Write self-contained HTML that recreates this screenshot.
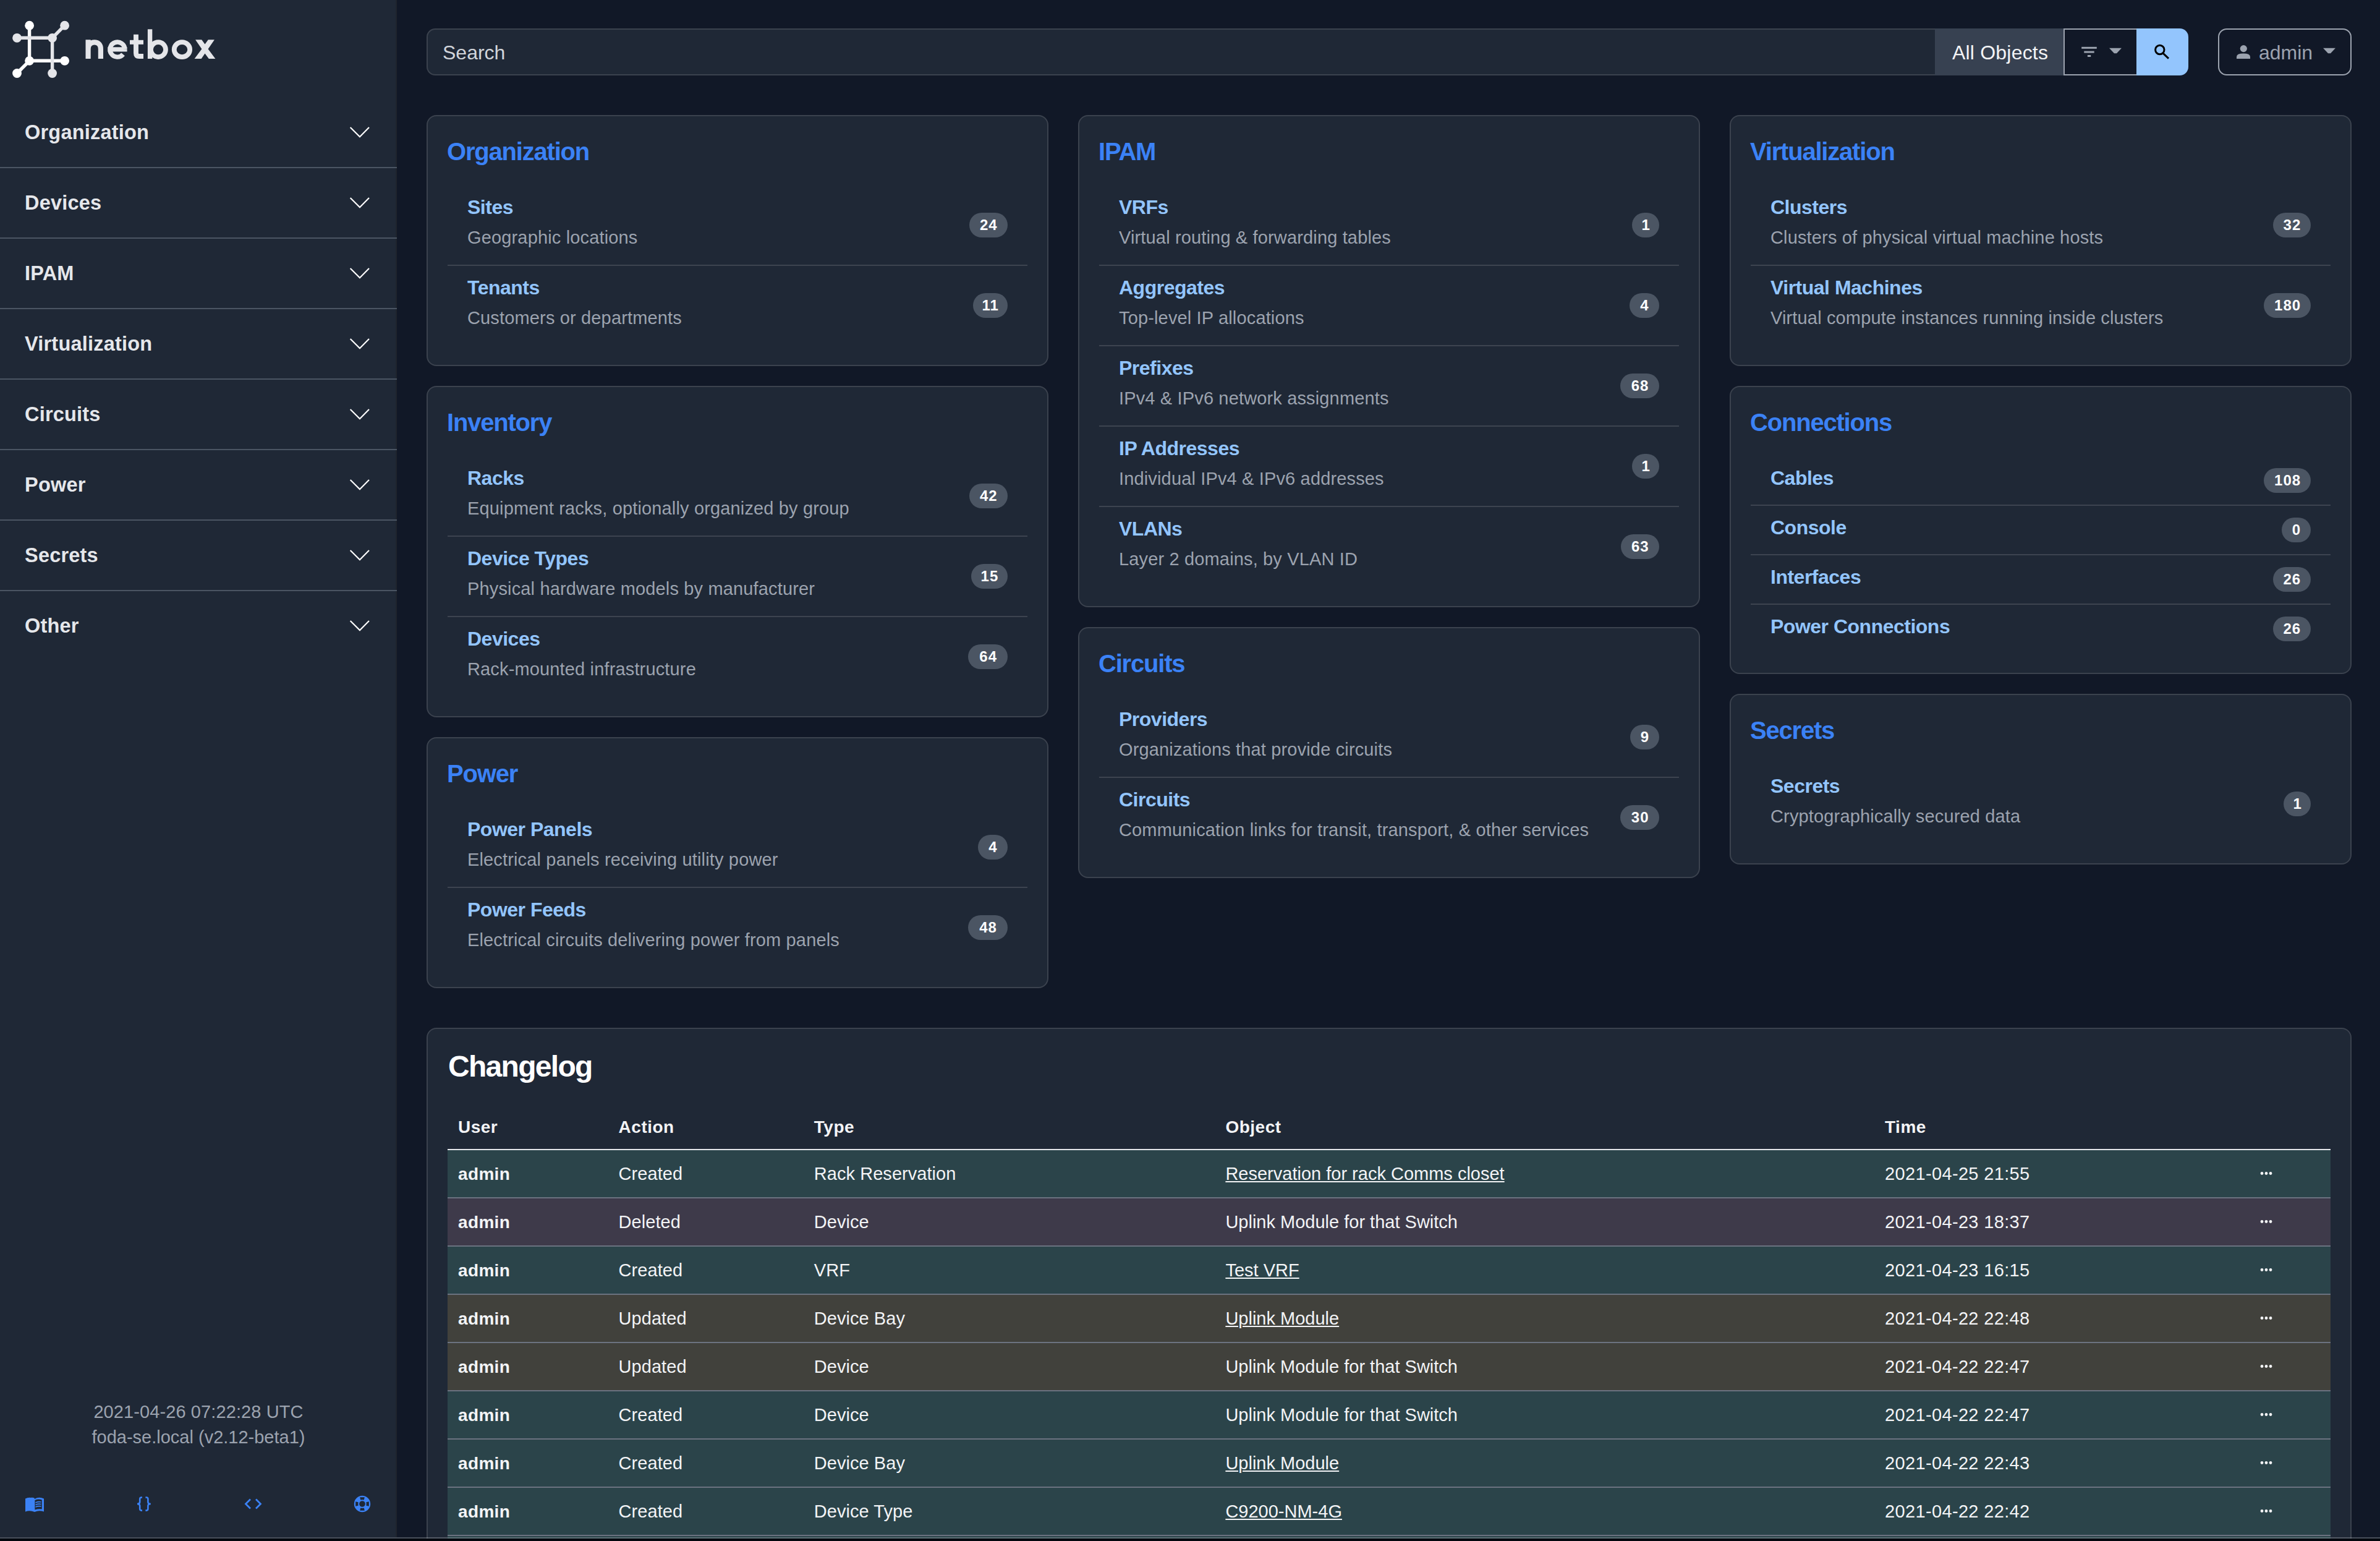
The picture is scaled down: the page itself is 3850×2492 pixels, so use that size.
<!DOCTYPE html>
<html><head><meta charset="utf-8"><title>NetBox</title>
<style>
html,body{margin:0;padding:0;}
body{width:3850px;height:2492px;overflow:hidden;position:relative;background:#111827;font-family:"Liberation Sans",sans-serif;}
.t{position:absolute;white-space:nowrap;}
.badge{position:absolute;height:40px;line-height:40px;border-radius:20px;background:#4b5563;color:#fff;font-weight:700;font-size:24px;text-align:center;letter-spacing:1px;text-indent:1px;}
</style></head><body>
<div style="position:absolute;left:0px;top:0px;width:642px;height:2486px;background:#1f2836;"></div>
<div style="position:absolute;left:640px;top:0px;width:2px;height:2486px;background:#1f242d;"></div>
<svg style="position:absolute;left:0;top:0" width="400" height="140" viewBox="0 0 400 140">
<g stroke-width="5.4" stroke-linecap="butt" fill="none">
<line x1="47.6" y1="41.2" x2="47.6" y2="98.3" stroke="#ffffff"/>
<line x1="47.6" y1="98.3" x2="104.6" y2="98.3" stroke="#ffffff"/>
<line x1="47.6" y1="98.3" x2="27.5" y2="118.5" stroke="#ffffff"/>
<line x1="27.5" y1="61.3" x2="84.6" y2="61.3" stroke="#e4e5e9"/>
<line x1="84.6" y1="61.3" x2="84.6" y2="118.5" stroke="#e4e5e9"/>
<line x1="84.6" y1="61.3" x2="104.6" y2="41.2" stroke="#e4e5e9"/>
</g>
<g>
<circle cx="47.6" cy="41.2" r="7.4" fill="#fff"/>
<circle cx="104.6" cy="41.2" r="7.4" fill="#e4e5e9"/>
<circle cx="27.5" cy="61.3" r="7.4" fill="#e4e5e9"/>
<circle cx="84.6" cy="61.3" r="7.4" fill="#e4e5e9"/>
<circle cx="47.6" cy="98.3" r="7.4" fill="#fff"/>
<circle cx="104.6" cy="98.3" r="7.4" fill="#fff"/>
<circle cx="27.5" cy="118.5" r="7.4" fill="#fff"/>
<circle cx="84.6" cy="118.5" r="7.4" fill="#e4e5e9"/>
</g>
<g fill="none" stroke="#e4e5e9">
<path d="M142.6 95 V64.3 M142.6 79 C142.6 72 147 68.4 152.8 68.4 C159 68.4 162.9 72 162.9 79 V95" stroke-width="8.2"/>
<path d="M174.2 79.85 H205.6 M201.9 79.85 A12 12 0 1 0 199.1 87.8" stroke-width="7.4"/>
<path d="M220 55.7 V86 Q220 91 225 91 H232" stroke-width="7.9"/>
<path d="M210 68.3 H232" stroke-width="7"/>
<path d="M242.6 47.3 V95" stroke-width="7.4"/>
<circle cx="256" cy="80.15" r="12" stroke-width="7.7"/>
<ellipse cx="294.45" cy="80.15" rx="12.7" ry="12" stroke-width="7.8"/>
</g>
<path d="M316.1 64.3 H326.2 L331.5 71.5 L336.8 64.3 H346.9 L336.6 79.2 L348.4 95 H337.8 L331.5 86.5 L325.7 95 H314.6 L326.4 79.2 Z" fill="#e4e5e9"/>
</svg>
<div class="t " style="left:40px;top:198.49px;font-size:32.5px;line-height:32.5px;color:#e5e7eb;font-weight:700;letter-spacing:0.2px;">Organization</div>
<svg style="position:absolute;left:560px;top:196px" width="44" height="30"><polyline points="6.7,10 22,25.2 37,10" fill="none" stroke="#fff" stroke-width="2.2"/></svg>
<div style="position:absolute;left:0px;top:270px;width:642px;height:2px;background:#4b5563;"></div>
<div class="t " style="left:40px;top:312.49px;font-size:32.5px;line-height:32.5px;color:#e5e7eb;font-weight:700;letter-spacing:0.2px;">Devices</div>
<svg style="position:absolute;left:560px;top:310px" width="44" height="30"><polyline points="6.7,10 22,25.2 37,10" fill="none" stroke="#fff" stroke-width="2.2"/></svg>
<div style="position:absolute;left:0px;top:384px;width:642px;height:2px;background:#4b5563;"></div>
<div class="t " style="left:40px;top:426.49px;font-size:32.5px;line-height:32.5px;color:#e5e7eb;font-weight:700;letter-spacing:0.2px;">IPAM</div>
<svg style="position:absolute;left:560px;top:424px" width="44" height="30"><polyline points="6.7,10 22,25.2 37,10" fill="none" stroke="#fff" stroke-width="2.2"/></svg>
<div style="position:absolute;left:0px;top:498px;width:642px;height:2px;background:#4b5563;"></div>
<div class="t " style="left:40px;top:540.49px;font-size:32.5px;line-height:32.5px;color:#e5e7eb;font-weight:700;letter-spacing:0.2px;">Virtualization</div>
<svg style="position:absolute;left:560px;top:538px" width="44" height="30"><polyline points="6.7,10 22,25.2 37,10" fill="none" stroke="#fff" stroke-width="2.2"/></svg>
<div style="position:absolute;left:0px;top:612px;width:642px;height:2px;background:#4b5563;"></div>
<div class="t " style="left:40px;top:654.49px;font-size:32.5px;line-height:32.5px;color:#e5e7eb;font-weight:700;letter-spacing:0.2px;">Circuits</div>
<svg style="position:absolute;left:560px;top:652px" width="44" height="30"><polyline points="6.7,10 22,25.2 37,10" fill="none" stroke="#fff" stroke-width="2.2"/></svg>
<div style="position:absolute;left:0px;top:726px;width:642px;height:2px;background:#4b5563;"></div>
<div class="t " style="left:40px;top:768.49px;font-size:32.5px;line-height:32.5px;color:#e5e7eb;font-weight:700;letter-spacing:0.2px;">Power</div>
<svg style="position:absolute;left:560px;top:766px" width="44" height="30"><polyline points="6.7,10 22,25.2 37,10" fill="none" stroke="#fff" stroke-width="2.2"/></svg>
<div style="position:absolute;left:0px;top:840px;width:642px;height:2px;background:#4b5563;"></div>
<div class="t " style="left:40px;top:882.49px;font-size:32.5px;line-height:32.5px;color:#e5e7eb;font-weight:700;letter-spacing:0.2px;">Secrets</div>
<svg style="position:absolute;left:560px;top:880px" width="44" height="30"><polyline points="6.7,10 22,25.2 37,10" fill="none" stroke="#fff" stroke-width="2.2"/></svg>
<div style="position:absolute;left:0px;top:954px;width:642px;height:2px;background:#4b5563;"></div>
<div class="t " style="left:40px;top:996.49px;font-size:32.5px;line-height:32.5px;color:#e5e7eb;font-weight:700;letter-spacing:0.2px;">Other</div>
<svg style="position:absolute;left:560px;top:994px" width="44" height="30"><polyline points="6.7,10 22,25.2 37,10" fill="none" stroke="#fff" stroke-width="2.2"/></svg>
<div class="t" style="left:0;width:642px;text-align:center;top:2268.90px;font-size:29px;line-height:28px;color:#9ca3af;letter-spacing:0.1px">2021-04-26 07:22:28 UTC</div>
<div class="t" style="left:0;width:642px;text-align:center;top:2310.10px;font-size:29px;line-height:28px;color:#9ca3af;letter-spacing:0px">foda-se.local (v2.12-beta1)</div>
<svg style="position:absolute;left:0;top:2400px" width="642" height="60" viewBox="0 2400 642 60">
<path d="M41 2424 C48 2421 58 2421 55.5 2424.5 L55.5 2444 C50 2442 45 2442 41 2444.5 Z" fill="#3b82f6"/>
<path d="M41 2423.5 Q48 2420 56 2424 Q63 2420 71 2423.5 V2444.6 Q63 2441.5 56 2445 Q48 2441.5 41 2444.6 Z" fill="#3b82f6"/>
<path d="M56.4 2426 Q62 2423.5 67.8 2425.5 V2440.5 Q62 2439.5 56.4 2441.5 Z" fill="#1f2836"/>
<path d="M57.5 2430 Q62 2428 66.5 2429 M57.5 2433.5 Q62 2431.5 66.5 2432.5 M57.5 2437 Q62 2435 66.5 2436" stroke="#3b82f6" stroke-width="1.6" fill="none"/>
<path d="M230 2421.5 H228.8 Q226.2 2421.5 226.2 2424.2 V2429 Q226.2 2432 222 2432 Q226.2 2432 226.2 2435 V2439.8 Q226.2 2442.6 228.8 2442.6 H230 M235.4 2421.5 H236.8 Q239.4 2421.5 239.4 2424.2 V2429 Q239.4 2432 243.8 2432 Q239.4 2432 239.4 2435 V2439.8 Q239.4 2442.6 236.8 2442.6 H235.4" stroke="#3b82f6" stroke-width="2.6" fill="none"/>
<path d="M405 2424.5 L397.5 2432 L405 2439.5 M414 2424.5 L421.5 2432 L414 2439.5" stroke="#3b82f6" stroke-width="2.8" fill="none"/>
<circle cx="586" cy="2432" r="13.2" fill="#3b82f6"/>
<circle cx="586" cy="2432" r="4.8" fill="#1f2836"/>
<path d="M582.2 2421.2 H589.8 L588.8 2425.6 Q586 2424.9 583.2 2425.6 Z" fill="#1f2836"/>
<path d="M582.2 2442.8 H589.8 L588.8 2438.4 Q586 2439.1 583.2 2438.4 Z" fill="#1f2836"/>
<path d="M575.2 2428.2 V2435.8 L579.6 2434.8 Q578.9 2432 579.6 2429.2 Z" fill="#1f2836"/>
<path d="M596.8 2428.2 V2435.8 L592.4 2434.8 Q593.1 2432 592.4 2429.2 Z" fill="#1f2836"/>
</svg>
<div style="position:absolute;left:690px;top:46px;width:2440px;height:76px;box-sizing:border-box;background:#1f2836;border:2px solid #3b424e;border-right:none;border-radius:14px 0 0 14px;"></div>
<div class="t " style="left:716px;top:69.11px;font-size:32px;line-height:32px;color:#d1d5db;">Search</div>
<div style="position:absolute;left:3130px;top:46px;width:208px;height:76px;background:#374151;"></div>
<div class="t " style="left:3158px;top:69.11px;font-size:32px;line-height:32px;color:#f3f4f6;letter-spacing:0.2px;">All Objects</div>
<div style="position:absolute;left:3338px;top:46px;width:118px;height:76px;box-sizing:border-box;background:#111827;border:2px solid #9ca3af;border-right:none;"></div>
<svg style="position:absolute;left:3338px;top:46px" width="118" height="76" viewBox="3338 46 118 76">
<rect x="3367.2" y="75.8" width="24.6" height="3" fill="#9ca3af"/>
<rect x="3371.3" y="82.6" width="16.4" height="3" fill="#9ca3af"/>
<rect x="3376.9" y="89" width="5.3" height="3" fill="#9ca3af"/>
<path d="M3412 77.8 H3432 L3424 86.2 H3420 Z" fill="#9ca3af"/>
</svg>
<div style="position:absolute;left:3456px;top:46px;width:84px;height:76px;background:#93c5fd;border-radius:0 14px 14px 0;"></div>
<svg style="position:absolute;left:3456px;top:46px" width="84" height="76" viewBox="3456 46 84 76">
<circle cx="3493.8" cy="80.5" r="7.2" stroke="#000" stroke-width="3" fill="none"/>
<line x1="3498.8" y1="85.8" x2="3508" y2="94.6" stroke="#000" stroke-width="3"/>
</svg>
<div style="position:absolute;left:3588px;top:46px;width:216px;height:76px;box-sizing:border-box;border:2px solid #9ca3af;border-radius:14px;"></div>
<svg style="position:absolute;left:3600px;top:60px" width="60" height="50" viewBox="3600 60 60 50">
<circle cx="3629.3" cy="78.6" r="5.6" fill="#9ca3af"/>
<path d="M3618 95 V92 Q3618 86.6 3629 86.6 Q3640 86.6 3640 92 V95 Z" fill="#9ca3af"/>
</svg>
<div class="t " style="left:3654px;top:68.81px;font-size:32px;line-height:32px;color:#9ca3af;">admin</div>
<svg style="position:absolute;left:3750px;top:70px" width="40" height="30" viewBox="3750 70 40 30">
<path d="M3758 77.8 H3778 L3770 86.2 H3766 Z" fill="#9ca3af"/>
</svg>
<div style="position:absolute;left:690px;top:186px;width:1006px;height:406px;box-sizing:border-box;background:#1f2836;border:2px solid #3b424e;border-radius:16px;"></div>
<div class="t " style="left:723px;top:224.64px;font-size:40px;line-height:40px;color:#3b82f6;font-weight:700;letter-spacing:-1.2px;">Organization</div>
<div class="t " style="left:756px;top:318.61px;font-size:32px;line-height:32px;color:#93c5fd;font-weight:700;letter-spacing:-0.5px;">Sites</div>
<div class="t " style="left:756px;top:370.45px;font-size:29px;line-height:29px;color:#9ca3af;letter-spacing:0.15px;">Geographic locations</div>
<div class="badge" style="left:1567.5px;top:343.5px;width:62.5px;">24</div>
<div style="position:absolute;left:724px;top:428px;width:938px;height:2px;background:#3d4450;"></div>
<div class="t " style="left:756px;top:448.61px;font-size:32px;line-height:32px;color:#93c5fd;font-weight:700;letter-spacing:-0.5px;">Tenants</div>
<div class="t " style="left:756px;top:500.45px;font-size:29px;line-height:29px;color:#9ca3af;letter-spacing:0.15px;">Customers or departments</div>
<div class="badge" style="left:1573.6px;top:473.5px;width:56.4px;">11</div>
<div style="position:absolute;left:690px;top:624px;width:1006px;height:536px;box-sizing:border-box;background:#1f2836;border:2px solid #3b424e;border-radius:16px;"></div>
<div class="t " style="left:723px;top:662.64px;font-size:40px;line-height:40px;color:#3b82f6;font-weight:700;letter-spacing:-1.2px;">Inventory</div>
<div class="t " style="left:756px;top:756.61px;font-size:32px;line-height:32px;color:#93c5fd;font-weight:700;letter-spacing:-0.5px;">Racks</div>
<div class="t " style="left:756px;top:808.45px;font-size:29px;line-height:29px;color:#9ca3af;letter-spacing:0.15px;">Equipment racks, optionally organized by group</div>
<div class="badge" style="left:1567.5px;top:781.5px;width:62.5px;">42</div>
<div style="position:absolute;left:724px;top:866px;width:938px;height:2px;background:#3d4450;"></div>
<div class="t " style="left:756px;top:886.61px;font-size:32px;line-height:32px;color:#93c5fd;font-weight:700;letter-spacing:-0.5px;">Device Types</div>
<div class="t " style="left:756px;top:938.45px;font-size:29px;line-height:29px;color:#9ca3af;letter-spacing:0.15px;">Physical hardware models by manufacturer</div>
<div class="badge" style="left:1570.8px;top:911.5px;width:59.2px;">15</div>
<div style="position:absolute;left:724px;top:996px;width:938px;height:2px;background:#3d4450;"></div>
<div class="t " style="left:756px;top:1016.61px;font-size:32px;line-height:32px;color:#93c5fd;font-weight:700;letter-spacing:-0.5px;">Devices</div>
<div class="t " style="left:756px;top:1068.45px;font-size:29px;line-height:29px;color:#9ca3af;letter-spacing:0.15px;">Rack-mounted infrastructure</div>
<div class="badge" style="left:1566.4px;top:1041.5px;width:63.6px;">64</div>
<div style="position:absolute;left:690px;top:1192px;width:1006px;height:406px;box-sizing:border-box;background:#1f2836;border:2px solid #3b424e;border-radius:16px;"></div>
<div class="t " style="left:723px;top:1230.64px;font-size:40px;line-height:40px;color:#3b82f6;font-weight:700;letter-spacing:-1.2px;">Power</div>
<div class="t " style="left:756px;top:1324.61px;font-size:32px;line-height:32px;color:#93c5fd;font-weight:700;letter-spacing:-0.5px;">Power Panels</div>
<div class="t " style="left:756px;top:1376.45px;font-size:29px;line-height:29px;color:#9ca3af;letter-spacing:0.15px;">Electrical panels receiving utility power</div>
<div class="badge" style="left:1582.0px;top:1349.5px;width:48.0px;">4</div>
<div style="position:absolute;left:724px;top:1434px;width:938px;height:2px;background:#3d4450;"></div>
<div class="t " style="left:756px;top:1454.61px;font-size:32px;line-height:32px;color:#93c5fd;font-weight:700;letter-spacing:-0.5px;">Power Feeds</div>
<div class="t " style="left:756px;top:1506.45px;font-size:29px;line-height:29px;color:#9ca3af;letter-spacing:0.15px;">Electrical circuits delivering power from panels</div>
<div class="badge" style="left:1566.0px;top:1479.5px;width:64.0px;">48</div>
<div style="position:absolute;left:1744px;top:186px;width:1006px;height:796px;box-sizing:border-box;background:#1f2836;border:2px solid #3b424e;border-radius:16px;"></div>
<div class="t " style="left:1777px;top:224.64px;font-size:40px;line-height:40px;color:#3b82f6;font-weight:700;letter-spacing:-1.2px;">IPAM</div>
<div class="t " style="left:1810px;top:318.61px;font-size:32px;line-height:32px;color:#93c5fd;font-weight:700;letter-spacing:-0.5px;">VRFs</div>
<div class="t " style="left:1810px;top:370.45px;font-size:29px;line-height:29px;color:#9ca3af;letter-spacing:0.15px;">Virtual routing &amp; forwarding tables</div>
<div class="badge" style="left:2640.2px;top:343.5px;width:43.8px;">1</div>
<div style="position:absolute;left:1778px;top:428px;width:938px;height:2px;background:#3d4450;"></div>
<div class="t " style="left:1810px;top:448.61px;font-size:32px;line-height:32px;color:#93c5fd;font-weight:700;letter-spacing:-0.5px;">Aggregates</div>
<div class="t " style="left:1810px;top:500.45px;font-size:29px;line-height:29px;color:#9ca3af;letter-spacing:0.15px;">Top-level IP allocations</div>
<div class="badge" style="left:2636.0px;top:473.5px;width:48.0px;">4</div>
<div style="position:absolute;left:1778px;top:558px;width:938px;height:2px;background:#3d4450;"></div>
<div class="t " style="left:1810px;top:578.61px;font-size:32px;line-height:32px;color:#93c5fd;font-weight:700;letter-spacing:-0.5px;">Prefixes</div>
<div class="t " style="left:1810px;top:630.45px;font-size:29px;line-height:29px;color:#9ca3af;letter-spacing:0.15px;">IPv4 &amp; IPv6 network assignments</div>
<div class="badge" style="left:2621.2px;top:603.5px;width:62.8px;">68</div>
<div style="position:absolute;left:1778px;top:688px;width:938px;height:2px;background:#3d4450;"></div>
<div class="t " style="left:1810px;top:708.61px;font-size:32px;line-height:32px;color:#93c5fd;font-weight:700;letter-spacing:-0.5px;">IP Addresses</div>
<div class="t " style="left:1810px;top:760.45px;font-size:29px;line-height:29px;color:#9ca3af;letter-spacing:0.15px;">Individual IPv4 &amp; IPv6 addresses</div>
<div class="badge" style="left:2640.2px;top:733.5px;width:43.8px;">1</div>
<div style="position:absolute;left:1778px;top:818px;width:938px;height:2px;background:#3d4450;"></div>
<div class="t " style="left:1810px;top:838.61px;font-size:32px;line-height:32px;color:#93c5fd;font-weight:700;letter-spacing:-0.5px;">VLANs</div>
<div class="t " style="left:1810px;top:890.45px;font-size:29px;line-height:29px;color:#9ca3af;letter-spacing:0.15px;">Layer 2 domains, by VLAN ID</div>
<div class="badge" style="left:2621.7px;top:863.5px;width:62.3px;">63</div>
<div style="position:absolute;left:1744px;top:1014px;width:1006px;height:406px;box-sizing:border-box;background:#1f2836;border:2px solid #3b424e;border-radius:16px;"></div>
<div class="t " style="left:1777px;top:1052.64px;font-size:40px;line-height:40px;color:#3b82f6;font-weight:700;letter-spacing:-1.2px;">Circuits</div>
<div class="t " style="left:1810px;top:1146.61px;font-size:32px;line-height:32px;color:#93c5fd;font-weight:700;letter-spacing:-0.5px;">Providers</div>
<div class="t " style="left:1810px;top:1198.45px;font-size:29px;line-height:29px;color:#9ca3af;letter-spacing:0.15px;">Organizations that provide circuits</div>
<div class="badge" style="left:2637.0px;top:1171.5px;width:47.0px;">9</div>
<div style="position:absolute;left:1778px;top:1256px;width:938px;height:2px;background:#3d4450;"></div>
<div class="t " style="left:1810px;top:1276.61px;font-size:32px;line-height:32px;color:#93c5fd;font-weight:700;letter-spacing:-0.5px;">Circuits</div>
<div class="t " style="left:1810px;top:1328.45px;font-size:29px;line-height:29px;color:#9ca3af;letter-spacing:0.15px;">Communication links for transit, transport, &amp; other services</div>
<div class="badge" style="left:2621.3px;top:1301.5px;width:62.7px;">30</div>
<div style="position:absolute;left:2798px;top:186px;width:1006px;height:406px;box-sizing:border-box;background:#1f2836;border:2px solid #3b424e;border-radius:16px;"></div>
<div class="t " style="left:2831px;top:224.64px;font-size:40px;line-height:40px;color:#3b82f6;font-weight:700;letter-spacing:-1.2px;">Virtualization</div>
<div class="t " style="left:2864px;top:318.61px;font-size:32px;line-height:32px;color:#93c5fd;font-weight:700;letter-spacing:-0.5px;">Clusters</div>
<div class="t " style="left:2864px;top:370.45px;font-size:29px;line-height:29px;color:#9ca3af;letter-spacing:0.15px;">Clusters of physical virtual machine hosts</div>
<div class="badge" style="left:3676.8px;top:343.5px;width:61.2px;">32</div>
<div style="position:absolute;left:2832px;top:428px;width:938px;height:2px;background:#3d4450;"></div>
<div class="t " style="left:2864px;top:448.61px;font-size:32px;line-height:32px;color:#93c5fd;font-weight:700;letter-spacing:-0.5px;">Virtual Machines</div>
<div class="t " style="left:2864px;top:500.45px;font-size:29px;line-height:29px;color:#9ca3af;letter-spacing:0.15px;">Virtual compute instances running inside clusters</div>
<div class="badge" style="left:3662.2px;top:473.5px;width:75.8px;">180</div>
<div style="position:absolute;left:2798px;top:624px;width:1006px;height:466px;box-sizing:border-box;background:#1f2836;border:2px solid #3b424e;border-radius:16px;"></div>
<div class="t " style="left:2831px;top:662.64px;font-size:40px;line-height:40px;color:#3b82f6;font-weight:700;letter-spacing:-1.2px;">Connections</div>
<div class="t " style="left:2864px;top:756.61px;font-size:32px;line-height:32px;color:#93c5fd;font-weight:700;letter-spacing:-0.5px;">Cables</div>
<div class="badge" style="left:3662.2px;top:756.5px;width:75.8px;">108</div>
<div style="position:absolute;left:2832px;top:816px;width:938px;height:2px;background:#3d4450;"></div>
<div class="t " style="left:2864px;top:836.61px;font-size:32px;line-height:32px;color:#93c5fd;font-weight:700;letter-spacing:-0.5px;">Console</div>
<div class="badge" style="left:3690.8px;top:836.5px;width:47.2px;">0</div>
<div style="position:absolute;left:2832px;top:896px;width:938px;height:2px;background:#3d4450;"></div>
<div class="t " style="left:2864px;top:916.61px;font-size:32px;line-height:32px;color:#93c5fd;font-weight:700;letter-spacing:-0.5px;">Interfaces</div>
<div class="badge" style="left:3676.7px;top:916.5px;width:61.3px;">26</div>
<div style="position:absolute;left:2832px;top:976px;width:938px;height:2px;background:#3d4450;"></div>
<div class="t " style="left:2864px;top:996.61px;font-size:32px;line-height:32px;color:#93c5fd;font-weight:700;letter-spacing:-0.5px;">Power Connections</div>
<div class="badge" style="left:3676.7px;top:996.5px;width:61.3px;">26</div>
<div style="position:absolute;left:2798px;top:1122px;width:1006px;height:276px;box-sizing:border-box;background:#1f2836;border:2px solid #3b424e;border-radius:16px;"></div>
<div class="t " style="left:2831px;top:1160.64px;font-size:40px;line-height:40px;color:#3b82f6;font-weight:700;letter-spacing:-1.2px;">Secrets</div>
<div class="t " style="left:2864px;top:1254.61px;font-size:32px;line-height:32px;color:#93c5fd;font-weight:700;letter-spacing:-0.5px;">Secrets</div>
<div class="t " style="left:2864px;top:1306.45px;font-size:29px;line-height:29px;color:#9ca3af;letter-spacing:0.15px;">Cryptographically secured data</div>
<div class="badge" style="left:3694.2px;top:1279.5px;width:43.8px;">1</div>
<div style="position:absolute;left:690px;top:1662px;width:3114px;height:1000px;box-sizing:border-box;background:#1f2836;border:2px solid #3b424e;border-radius:16px;"></div>
<div class="t " style="left:725px;top:1701.37px;font-size:48px;line-height:48px;color:#ffffff;font-weight:700;letter-spacing:-1.7px;">Changelog</div>
<div class="t " style="left:741px;top:1809.30px;font-size:28px;line-height:28px;color:#f3f4f6;font-weight:700;letter-spacing:0.5px;">User</div>
<div class="t " style="left:1000.6px;top:1809.30px;font-size:28px;line-height:28px;color:#f3f4f6;font-weight:700;letter-spacing:0.5px;">Action</div>
<div class="t " style="left:1316.8px;top:1809.30px;font-size:28px;line-height:28px;color:#f3f4f6;font-weight:700;letter-spacing:0.5px;">Type</div>
<div class="t " style="left:1982.4px;top:1809.30px;font-size:28px;line-height:28px;color:#f3f4f6;font-weight:700;letter-spacing:0.5px;">Object</div>
<div class="t " style="left:3049px;top:1809.30px;font-size:28px;line-height:28px;color:#f3f4f6;font-weight:700;letter-spacing:0.5px;">Time</div>
<div style="position:absolute;left:724px;top:1858px;width:3046px;height:2px;background:#e5e7eb;"></div>
<div style="position:absolute;left:724px;top:1860px;width:3046px;height:76px;background:#2b444a;"></div>
<div style="position:absolute;left:724px;top:1936px;width:3046px;height:2px;background:#6b7280;"></div>
<div class="t " style="left:741px;top:1885.30px;font-size:28px;line-height:28px;color:#f3f4f6;font-weight:700;letter-spacing:0.35px;">admin</div>
<div class="t " style="left:1000.6px;top:1884.45px;font-size:29px;line-height:29px;color:#f3f4f6;letter-spacing:0.05px;">Created</div>
<div class="t " style="left:1316.8px;top:1884.45px;font-size:29px;line-height:29px;color:#f3f4f6;letter-spacing:0.05px;">Rack Reservation</div>
<div class="t " style="left:1982.4px;top:1884.45px;font-size:29px;line-height:29px;color:#f3f4f6;text-decoration:underline;text-underline-offset:2px;text-decoration-thickness:2px;">Reservation for rack Comms closet</div>
<div class="t " style="left:3049px;top:1884.45px;font-size:29px;line-height:29px;color:#f3f4f6;letter-spacing:0.35px;">2021-04-25 21:55</div>
<svg style="position:absolute;left:3650px;top:1890px" width="30" height="12"><circle cx="9" cy="7.5" r="2.4" fill="#f3f4f6"/><circle cx="16" cy="7.5" r="2.4" fill="#f3f4f6"/><circle cx="23" cy="7.5" r="2.4" fill="#f3f4f6"/></svg>
<div style="position:absolute;left:724px;top:1938px;width:3046px;height:76px;background:#3e3a4a;"></div>
<div style="position:absolute;left:724px;top:2014px;width:3046px;height:2px;background:#6b7280;"></div>
<div class="t " style="left:741px;top:1963.30px;font-size:28px;line-height:28px;color:#f3f4f6;font-weight:700;letter-spacing:0.35px;">admin</div>
<div class="t " style="left:1000.6px;top:1962.45px;font-size:29px;line-height:29px;color:#f3f4f6;letter-spacing:0.05px;">Deleted</div>
<div class="t " style="left:1316.8px;top:1962.45px;font-size:29px;line-height:29px;color:#f3f4f6;letter-spacing:0.05px;">Device</div>
<div class="t " style="left:1982.4px;top:1962.45px;font-size:29px;line-height:29px;color:#f3f4f6;">Uplink Module for that Switch</div>
<div class="t " style="left:3049px;top:1962.45px;font-size:29px;line-height:29px;color:#f3f4f6;letter-spacing:0.35px;">2021-04-23 18:37</div>
<svg style="position:absolute;left:3650px;top:1968px" width="30" height="12"><circle cx="9" cy="7.5" r="2.4" fill="#f3f4f6"/><circle cx="16" cy="7.5" r="2.4" fill="#f3f4f6"/><circle cx="23" cy="7.5" r="2.4" fill="#f3f4f6"/></svg>
<div style="position:absolute;left:724px;top:2016px;width:3046px;height:76px;background:#2b444a;"></div>
<div style="position:absolute;left:724px;top:2092px;width:3046px;height:2px;background:#6b7280;"></div>
<div class="t " style="left:741px;top:2041.30px;font-size:28px;line-height:28px;color:#f3f4f6;font-weight:700;letter-spacing:0.35px;">admin</div>
<div class="t " style="left:1000.6px;top:2040.45px;font-size:29px;line-height:29px;color:#f3f4f6;letter-spacing:0.05px;">Created</div>
<div class="t " style="left:1316.8px;top:2040.45px;font-size:29px;line-height:29px;color:#f3f4f6;letter-spacing:0.05px;">VRF</div>
<div class="t " style="left:1982.4px;top:2040.45px;font-size:29px;line-height:29px;color:#f3f4f6;text-decoration:underline;text-underline-offset:2px;text-decoration-thickness:2px;">Test VRF</div>
<div class="t " style="left:3049px;top:2040.45px;font-size:29px;line-height:29px;color:#f3f4f6;letter-spacing:0.35px;">2021-04-23 16:15</div>
<svg style="position:absolute;left:3650px;top:2046px" width="30" height="12"><circle cx="9" cy="7.5" r="2.4" fill="#f3f4f6"/><circle cx="16" cy="7.5" r="2.4" fill="#f3f4f6"/><circle cx="23" cy="7.5" r="2.4" fill="#f3f4f6"/></svg>
<div style="position:absolute;left:724px;top:2094px;width:3046px;height:76px;background:#41413c;"></div>
<div style="position:absolute;left:724px;top:2170px;width:3046px;height:2px;background:#6b7280;"></div>
<div class="t " style="left:741px;top:2119.30px;font-size:28px;line-height:28px;color:#f3f4f6;font-weight:700;letter-spacing:0.35px;">admin</div>
<div class="t " style="left:1000.6px;top:2118.45px;font-size:29px;line-height:29px;color:#f3f4f6;letter-spacing:0.05px;">Updated</div>
<div class="t " style="left:1316.8px;top:2118.45px;font-size:29px;line-height:29px;color:#f3f4f6;letter-spacing:0.05px;">Device Bay</div>
<div class="t " style="left:1982.4px;top:2118.45px;font-size:29px;line-height:29px;color:#f3f4f6;text-decoration:underline;text-underline-offset:2px;text-decoration-thickness:2px;">Uplink Module</div>
<div class="t " style="left:3049px;top:2118.45px;font-size:29px;line-height:29px;color:#f3f4f6;letter-spacing:0.35px;">2021-04-22 22:48</div>
<svg style="position:absolute;left:3650px;top:2124px" width="30" height="12"><circle cx="9" cy="7.5" r="2.4" fill="#f3f4f6"/><circle cx="16" cy="7.5" r="2.4" fill="#f3f4f6"/><circle cx="23" cy="7.5" r="2.4" fill="#f3f4f6"/></svg>
<div style="position:absolute;left:724px;top:2172px;width:3046px;height:76px;background:#41413c;"></div>
<div style="position:absolute;left:724px;top:2248px;width:3046px;height:2px;background:#6b7280;"></div>
<div class="t " style="left:741px;top:2197.30px;font-size:28px;line-height:28px;color:#f3f4f6;font-weight:700;letter-spacing:0.35px;">admin</div>
<div class="t " style="left:1000.6px;top:2196.45px;font-size:29px;line-height:29px;color:#f3f4f6;letter-spacing:0.05px;">Updated</div>
<div class="t " style="left:1316.8px;top:2196.45px;font-size:29px;line-height:29px;color:#f3f4f6;letter-spacing:0.05px;">Device</div>
<div class="t " style="left:1982.4px;top:2196.45px;font-size:29px;line-height:29px;color:#f3f4f6;">Uplink Module for that Switch</div>
<div class="t " style="left:3049px;top:2196.45px;font-size:29px;line-height:29px;color:#f3f4f6;letter-spacing:0.35px;">2021-04-22 22:47</div>
<svg style="position:absolute;left:3650px;top:2202px" width="30" height="12"><circle cx="9" cy="7.5" r="2.4" fill="#f3f4f6"/><circle cx="16" cy="7.5" r="2.4" fill="#f3f4f6"/><circle cx="23" cy="7.5" r="2.4" fill="#f3f4f6"/></svg>
<div style="position:absolute;left:724px;top:2250px;width:3046px;height:76px;background:#2b444a;"></div>
<div style="position:absolute;left:724px;top:2326px;width:3046px;height:2px;background:#6b7280;"></div>
<div class="t " style="left:741px;top:2275.30px;font-size:28px;line-height:28px;color:#f3f4f6;font-weight:700;letter-spacing:0.35px;">admin</div>
<div class="t " style="left:1000.6px;top:2274.45px;font-size:29px;line-height:29px;color:#f3f4f6;letter-spacing:0.05px;">Created</div>
<div class="t " style="left:1316.8px;top:2274.45px;font-size:29px;line-height:29px;color:#f3f4f6;letter-spacing:0.05px;">Device</div>
<div class="t " style="left:1982.4px;top:2274.45px;font-size:29px;line-height:29px;color:#f3f4f6;">Uplink Module for that Switch</div>
<div class="t " style="left:3049px;top:2274.45px;font-size:29px;line-height:29px;color:#f3f4f6;letter-spacing:0.35px;">2021-04-22 22:47</div>
<svg style="position:absolute;left:3650px;top:2280px" width="30" height="12"><circle cx="9" cy="7.5" r="2.4" fill="#f3f4f6"/><circle cx="16" cy="7.5" r="2.4" fill="#f3f4f6"/><circle cx="23" cy="7.5" r="2.4" fill="#f3f4f6"/></svg>
<div style="position:absolute;left:724px;top:2328px;width:3046px;height:76px;background:#2b444a;"></div>
<div style="position:absolute;left:724px;top:2404px;width:3046px;height:2px;background:#6b7280;"></div>
<div class="t " style="left:741px;top:2353.30px;font-size:28px;line-height:28px;color:#f3f4f6;font-weight:700;letter-spacing:0.35px;">admin</div>
<div class="t " style="left:1000.6px;top:2352.45px;font-size:29px;line-height:29px;color:#f3f4f6;letter-spacing:0.05px;">Created</div>
<div class="t " style="left:1316.8px;top:2352.45px;font-size:29px;line-height:29px;color:#f3f4f6;letter-spacing:0.05px;">Device Bay</div>
<div class="t " style="left:1982.4px;top:2352.45px;font-size:29px;line-height:29px;color:#f3f4f6;text-decoration:underline;text-underline-offset:2px;text-decoration-thickness:2px;">Uplink Module</div>
<div class="t " style="left:3049px;top:2352.45px;font-size:29px;line-height:29px;color:#f3f4f6;letter-spacing:0.35px;">2021-04-22 22:43</div>
<svg style="position:absolute;left:3650px;top:2358px" width="30" height="12"><circle cx="9" cy="7.5" r="2.4" fill="#f3f4f6"/><circle cx="16" cy="7.5" r="2.4" fill="#f3f4f6"/><circle cx="23" cy="7.5" r="2.4" fill="#f3f4f6"/></svg>
<div style="position:absolute;left:724px;top:2406px;width:3046px;height:76px;background:#2b444a;"></div>
<div style="position:absolute;left:724px;top:2482px;width:3046px;height:2px;background:#6b7280;"></div>
<div class="t " style="left:741px;top:2431.30px;font-size:28px;line-height:28px;color:#f3f4f6;font-weight:700;letter-spacing:0.35px;">admin</div>
<div class="t " style="left:1000.6px;top:2430.45px;font-size:29px;line-height:29px;color:#f3f4f6;letter-spacing:0.05px;">Created</div>
<div class="t " style="left:1316.8px;top:2430.45px;font-size:29px;line-height:29px;color:#f3f4f6;letter-spacing:0.05px;">Device Type</div>
<div class="t " style="left:1982.4px;top:2430.45px;font-size:29px;line-height:29px;color:#f3f4f6;text-decoration:underline;text-underline-offset:2px;text-decoration-thickness:2px;">C9200-NM-4G</div>
<div class="t " style="left:3049px;top:2430.45px;font-size:29px;line-height:29px;color:#f3f4f6;letter-spacing:0.35px;">2021-04-22 22:42</div>
<svg style="position:absolute;left:3650px;top:2436px" width="30" height="12"><circle cx="9" cy="7.5" r="2.4" fill="#f3f4f6"/><circle cx="16" cy="7.5" r="2.4" fill="#f3f4f6"/><circle cx="23" cy="7.5" r="2.4" fill="#f3f4f6"/></svg>
<div style="position:absolute;left:724px;top:2484px;width:3046px;height:76px;background:#2b444a;"></div>
<div style="position:absolute;left:724px;top:2560px;width:3046px;height:2px;background:#6b7280;"></div>
<div style="position:absolute;left:0px;top:2486px;width:3850px;height:2px;background:rgba(255,255,255,0.24);"></div>
<div style="position:absolute;left:0px;top:2488px;width:3850px;height:4px;background:#02070e;"></div>
</body></html>
